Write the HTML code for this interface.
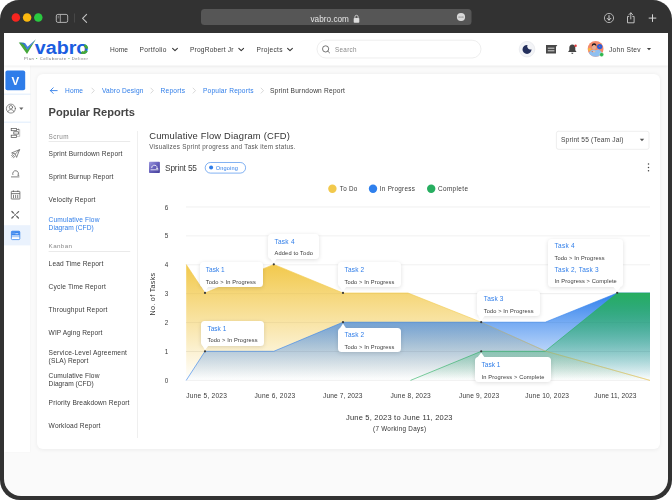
<!DOCTYPE html>
<html lang="en">
<head>
<meta charset="utf-8">
<title>Vabro - Cumulative Flow Diagram</title>
<style>
html,body{margin:0;padding:0;}
body{width:672px;height:500px;overflow:hidden;background:#fff;font-family:"Liberation Sans",Arial,sans-serif;position:relative;}
.abs{position:absolute;}
.win{position:absolute;left:0;top:0;width:672px;height:500px;background:#323232;border-radius:19px 19px 20px 20px;overflow:hidden;}
.page{position:absolute;left:4px;top:33px;width:664.4px;height:462.6px;background:#fafafa;border-radius:0 0 17px 17px;overflow:hidden;}
.t{position:absolute;white-space:nowrap;line-height:12px;height:12px;}
.nav{position:absolute;left:0;top:0;width:664px;height:32px;background:#fff;box-shadow:0 1px 0 rgba(255,255,255,.55), 0 1.5px 3px rgba(0,0,0,.07);}
.rail{position:absolute;left:0;top:32px;width:26px;height:386.6px;background:#fff;box-shadow:0.5px 0 1.5px rgba(0,0,0,.05), 0.5px 0 0 rgba(255,255,255,.5);}
.card{position:absolute;left:33.3px;top:41px;width:623px;height:375px;background:#fff;border-radius:6px;box-shadow:0 0.5px 4px rgba(0,0,0,.06);}
.tip{position:absolute;background:#fff;border-radius:3.5px;box-shadow:0 1px 4px rgba(0,0,0,.13);}
.hr{position:absolute;height:0.6px;background:#dcdcdc;}
</style>
</head>
<body>
<div class="win">
  <!-- title bar -->
  <svg class="abs" style="left:0;top:0" width="672" height="33" viewBox="0 0 672 33" fill="none">
    <circle cx="15.9" cy="17.5" r="4.25" fill="#f6251f"/><circle cx="27.1" cy="17.5" r="4.25" fill="#fbb90f"/><circle cx="38.3" cy="17.5" r="4.25" fill="#2ac940"/>
    <rect x="56.3" y="14.4" width="11.4" height="8" rx="1.6" stroke="#bdbdbd" stroke-width="0.9"/>
    <line x1="60.3" y1="14.4" x2="60.3" y2="22.4" stroke="#bdbdbd" stroke-width="0.8"/>
    <line x1="57.6" y1="16.3" x2="59.2" y2="16.3" stroke="#bdbdbd" stroke-width="0.5"/>
    <line x1="57.6" y1="17.8" x2="59.2" y2="17.8" stroke="#bdbdbd" stroke-width="0.5"/>
    <line x1="74.5" y1="13.5" x2="74.5" y2="22.5" stroke="#555" stroke-width="0.6"/>
    <polyline points="86.6,14.3 82.6,18.3 86.6,22.3" stroke="#c4c4c4" stroke-width="1.1" stroke-linecap="round" stroke-linejoin="round"/>
    <rect x="201" y="9" width="270.5" height="16" rx="3.5" fill="#565656"/>
    <!-- lock -->
    <rect x="353.7" y="18" width="5.6" height="4.700" rx="0.8" fill="#dcdcdc"/>
    <path d="M354.9 18.1v-1.200a1.600 1.600 0 0 1 3.200 0v1.200" stroke="#dcdcdc" stroke-width="0.85"/>
    <circle cx="461" cy="17" r="4.1" fill="#d9d9d9"/>
    <circle cx="459.1" cy="17" r="0.6" fill="#555"/><circle cx="461" cy="17" r="0.6" fill="#555"/><circle cx="462.9" cy="17" r="0.6" fill="#555"/>
    <!-- download -->
    <circle cx="609" cy="18" r="4.6" stroke="#cfcfcf" stroke-width="0.8"/>
    <path d="M609 15.600v4.400M607.200 18.400l1.800 1.800 1.800-1.800" stroke="#d6d6d6" stroke-width="1" stroke-linecap="round" stroke-linejoin="round"/>
    <!-- share -->
    <path d="M629.2 16.4h-1.7v6.4h6.6v-6.4h-1.7" stroke="#cfcfcf" stroke-width="0.9" stroke-linejoin="round"/>
    <path d="M630.8 13v6M629 14.6l1.8-1.8 1.8 1.8" stroke="#cfcfcf" stroke-width="0.9" stroke-linecap="round" stroke-linejoin="round"/>
    <!-- plus -->
    <path d="M652.5 14.7v6.8M649.1 18.1h6.8" stroke="#d4d4d4" stroke-width="1" stroke-linecap="round"/>
  </svg>

  <div class="page">
    <div class="rail"></div>
    <div class="nav"></div>
    <div class="card"></div>
  </div>
</div>

<!-- everything below is positioned in absolute page coordinates -->
<svg class="abs" style="left:0;top:0" width="672" height="500" viewBox="0 0 672 500" fill="none">
  <defs>
    <linearGradient id="gy" x1="0" y1="264.4" x2="0" y2="380.3" gradientUnits="userSpaceOnUse">
      <stop offset="0" stop-color="#f2c94c" stop-opacity="1"/>
      <stop offset="1" stop-color="#f2c94c" stop-opacity="0"/>
    </linearGradient>
    <linearGradient id="gb" x1="0" y1="293" x2="0" y2="380.3" gradientUnits="userSpaceOnUse">
      <stop offset="0" stop-color="#2f80ed" stop-opacity="1"/>
      <stop offset="1" stop-color="#2f80ed" stop-opacity="0"/>
    </linearGradient>
    <linearGradient id="gg" x1="0" y1="293" x2="0" y2="380.3" gradientUnits="userSpaceOnUse">
      <stop offset="0" stop-color="#27ae60" stop-opacity="1"/>
      <stop offset="1" stop-color="#27ae60" stop-opacity="0"/>
    </linearGradient>
    <linearGradient id="gp" x1="0" y1="0" x2="1" y2="1">
      <stop offset="0" stop-color="#9c98de"/>
      <stop offset="0.5" stop-color="#6660bb"/>
      <stop offset="1" stop-color="#46409a"/>
    </linearGradient>
  </defs>

  <!-- logo -->
  <g id="logo">
    <path d="M18.8 42.5L23.8 42.7L27.3 49.6L36 39L27 53.9Z" fill="#46a83a"/>
    <path d="M19.6 42.6L25 42.9L27.6 46.8L35.6 39.4L27.5 50L23.6 44.4Z" fill="#2f6fdc" opacity=".9"/>
    <text x="34.8" y="53.7" font-family="'Liberation Sans',Arial,sans-serif" font-weight="700" font-size="17.6" textLength="53.6" lengthAdjust="spacingAndGlyphs" fill="#1b5de0">vabro</text>
    <path d="M84.290 45.480A3.450 3.700 0 0 1 86.840 48.730" stroke="#46a83a" stroke-width="2.700"/>
    <path d="M86.530 50.610A3.450 3.700 0 0 1 81.420 52.080" stroke="#46a83a" stroke-width="2.700"/>
  </g>

  <!-- nav carets -->
  <g stroke="#333" stroke-width="1.05" stroke-linecap="round" stroke-linejoin="round">
    <polyline points="172.6,48.3 175,50.7 177.4,48.3"/>
    <polyline points="238.8,48.3 241.2,50.7 243.6,48.3"/>
    <polyline points="287.6,48.3 290,50.7 292.4,48.3"/>
  </g>
  <!-- search -->
  <rect x="317" y="40.200" width="164" height="17.800" rx="8.900" fill="#fff" stroke="#e3e3e3" stroke-width="0.600"/>
  <circle cx="325.6" cy="48.900" r="3.100" stroke="#555" stroke-width="0.800"/>
  <line x1="327.900" y1="51.200" x2="329.600" y2="52.900" stroke="#555" stroke-width="0.800" stroke-linecap="round"/>
  <!-- moon -->
  <circle cx="527" cy="49.2" r="7.8" fill="#f3f4f7" stroke="#e2e4ea" stroke-width="0.6"/>
  <path d="M527.5 45A4.5 4.5 0 1 0 531.5 49.2A3.1 3.1 0 0 1 527.5 45Z" fill="#232f5c"/>
  <!-- message icon -->
  <path d="M546 45h11.4l-1.4 1.7v6.7h-10z" fill="#484848"/>
  <line x1="547.8" y1="48.2" x2="554.4" y2="48.2" stroke="#e8e8e8" stroke-width="0.9"/>
  <line x1="547.8" y1="50.8" x2="554.4" y2="50.8" stroke="#e8e8e8" stroke-width="0.9"/>
  <!-- bell -->
  <path d="M572.3 44.6c-1.9 0-3 1.4-3 3.2v2.4l-1 1.4v.5h8v-.5l-1-1.4v-2.4c0-1.8-1.1-3.2-3-3.2z" fill="#444"/>
  <path d="M571.2 52.8h2.2a1.1 1.1 0 0 1-2.2 0z" fill="#444"/>
  <circle cx="575.6" cy="45.7" r="1.2" fill="#e23b3b"/>
  <!-- avatar -->
  <clipPath id="avc"><circle cx="595.6" cy="48.9" r="7.9"/></clipPath>
  <circle cx="595.6" cy="48.9" r="7.9" fill="#f48a6b"/>
  <g clip-path="url(#avc)">
    <circle cx="589.7" cy="49.3" r="1.6" fill="#f6b63e"/>
    <path d="M588 58c.2-5.400 2-8 5.200-8.300l2.400.6 2.400-.8c3 .6 4.600 3.200 5.200 8.500z" fill="#8fbff0"/>
    <path d="M592.2 50.8l1.9 1.9 1.7-2z" fill="#e9c3aa"/>
    <ellipse cx="594" cy="47.2" rx="2" ry="2.5" fill="#e2ae93"/>
    <path d="M591.8 46.6c-.3-2.2.8-3.4 2.3-3.4s2.6 1.2 2.2 3.2c-.6-1.1-1.300-1.500-2.2-1.500s-1.700.500-2.300 1.700z" fill="#2a2024"/>
    <circle cx="599.7" cy="46.6" r="2.7" fill="#2c5fd8"/>
    <circle cx="599.7" cy="46.3" r="0.6" fill="#e8505a"/>
    <circle cx="592.3" cy="51.6" r="0.6" fill="#e0604a"/>
  </g>
  <circle cx="601.6" cy="54.6" r="2.1" fill="#2fb84f" stroke="#fff" stroke-width="0.4"/>
  <path d="M646.9 48l2.1 2.3 2.1-2.3z" fill="#444"/>

  <!-- rail -->
  <rect x="5.4" y="70.4" width="19.8" height="19.8" rx="2" fill="#2f7de9"/>
  <rect x="4" y="93.8" width="26.5" height="0.6" fill="#c9defa"/>
  <rect x="4" y="121.8" width="26.5" height="0.6" fill="#c9defa"/>
  <rect x="4" y="225.2" width="26.5" height="20.2" fill="#eaf2fd"/>
  <g stroke="#666" stroke-width="0.75" stroke-linecap="round" stroke-linejoin="round">
    <circle cx="10.9" cy="108.6" r="4.5"/>
    <circle cx="10.9" cy="107.2" r="1.7"/>
    <path d="M7.8 111.8c.6-1.5 1.7-2.2 3.1-2.2s2.5.7 3.1 2.2"/>
  </g>
  <path d="M19.2 107.6l2.1 2.3 2.1-2.3z" fill="#666"/>
  <!-- icon1 gantt -->
  <g stroke="#555" stroke-width="0.75" fill="none">
    <rect x="11.2" y="128.4" width="5.4" height="2.3"/>
    <rect x="13.8" y="131.8" width="4.6" height="2.3"/>
    <rect x="11.2" y="135.2" width="5.4" height="2.4"/>
    <path d="M16.6 129.5h3.1v6.9h-3.1" stroke="#999" stroke-width="0.6"/>
    <path d="M18.6 128.4l-1.4 1.1 1.4 1.1z" fill="#555" stroke="none"/>
  </g>
  <!-- icon2 rocket -->
  <g stroke="#555" stroke-width="0.7" stroke-linejoin="round" stroke-linecap="round" fill="none">
    <path d="M12 152.8l7.6-3.2-3 7.8-1.4-3.2z"/>
    <path d="M15.2 154.2l4.2-4.4M13.6 155.4l-1.4 1.6M14.4 156.4l-.8 1.4M12.8 154.6l-1.2.8"/>
  </g>
  <!-- icon3 libra -->
  <g stroke="#555" stroke-width="0.75" stroke-linecap="round" fill="none">
    <path d="M12.8 174.6a2.9 2.9 0 1 1 5 .8h1"/>
    <path d="M11.4 176.9h7.6"/>
  </g>
  <!-- icon4 calendar -->
  <g stroke="#555" stroke-width="0.75" fill="none">
    <rect x="11.3" y="191.4" width="8.6" height="7.6" rx="0.3"/>
    <path d="M11.3 193.6h8.6M13.4 190.4v1.6M17.8 190.4v1.6M13.5 194.8v3.4M15.6 194.8v3.4M17.7 194.8v3.4"/>
  </g>
  <!-- icon5 tools -->
  <g stroke="#555" stroke-linecap="round" fill="none">
    <path d="M12.6 212.2l5.6 5.6M18 212l-5.8 5.8" stroke-width="0.7"/>
    <path d="M11.9 211.5l1.3 1.3M17.3 212.9l1.3-1.3M16.9 216.5l1.5 1.5M13.2 216.7l-1.3 1.3" stroke-width="1.3" stroke="#666"/>
  </g>
  <!-- icon6 active -->
  <rect x="11.4" y="231.2" width="8.4" height="8.4" rx="0.9" stroke="#3a86ee" stroke-width="0.8" fill="#fff"/>
  <rect x="11.4" y="231.2" width="8.4" height="4.2" fill="#3a86ee"/>
  <line x1="12.6" y1="233.2" x2="14.6" y2="233.2" stroke="#fff" stroke-width="0.7" stroke-dasharray="0.7 0.5"/>
  <line x1="15.6" y1="233.6" x2="18.6" y2="233.6" stroke="#fff" stroke-width="1.2" stroke-dasharray="0.6 0.4"/>
  <line x1="11.4" y1="236.7" x2="19.8" y2="236.7" stroke="#3a86ee" stroke-width="0.5"/>

  <!-- breadcrumb -->
  <g stroke="#2f7de9" stroke-width="0.9" stroke-linecap="round" stroke-linejoin="round">
    <path d="M50.4 90.6h6.8M53.2 87.8l-2.8 2.8 2.8 2.8"/>
  </g>
  <g stroke="#c8c8c8" stroke-width="0.7" stroke-linecap="round" stroke-linejoin="round">
    <polyline points="91.9,88.1 94.3,90.6 91.9,93.1"/>
    <polyline points="150.9,88.1 153.3,90.6 150.9,93.1"/>
    <polyline points="193.1,88.1 195.5,90.6 193.1,93.1"/>
    <polyline points="261.1,88.1 263.5,90.6 261.1,93.1"/>
  </g>

  <!-- list separators -->
  <rect x="48.6" y="141.4" width="81.6" height="0.6" fill="#dcdcdc"/>
  <rect x="48.6" y="251" width="81.6" height="0.6" fill="#dcdcdc"/>
  <rect x="137.2" y="131" width="0.6" height="307" fill="#e4e4e4"/>

  <!-- sprint icon -->
  <rect x="149" y="161.8" width="10.9" height="11.2" rx="0.8" fill="url(#gp)"/>
  <g stroke="#fff" stroke-width="0.8" stroke-linecap="round" fill="none">
    <path d="M151.7 167.7a2.7 2 0 1 1 4.7.8h1.4"/>
    <path d="M151 169.8h7"/>
  </g>
  <!-- pill -->
  <rect x="205.2" y="162.5" width="40.4" height="10.6" rx="5.3" fill="#fff" stroke="#2f7de9" stroke-width="0.6"/>
  <circle cx="211.1" cy="167.5" r="2" fill="#2f7de9"/>
  <!-- select -->
  <rect x="556.4" y="131.3" width="92.6" height="18" rx="2" fill="#fff" stroke="#e2e2e2" stroke-width="0.6"/>
  <path d="M639.8 138.8l2.2 2.4 2.2-2.4z" fill="#555"/>
  <!-- kebab -->
  <circle cx="648.5" cy="164" r="0.75" fill="#444"/><circle cx="648.5" cy="167.4" r="0.75" fill="#444"/><circle cx="648.5" cy="170.8" r="0.75" fill="#444"/>
  <!-- legend -->
  <circle cx="332.4" cy="188.7" r="4.2" fill="#f2c94c"/>
  <circle cx="373" cy="188.7" r="4.2" fill="#2f80ed"/>
  <circle cx="431.2" cy="188.7" r="4.2" fill="#27ae60"/>

  <!-- grid -->
  <g stroke="#e6e6e6" stroke-width="0.6">
    <line x1="186" y1="207" x2="650" y2="207"/>
    <line x1="186" y1="235.9" x2="650" y2="235.9"/>
    <line x1="186" y1="264.8" x2="650" y2="264.8"/>
    <line x1="186" y1="293.7" x2="650" y2="293.7"/>
    <line x1="186" y1="322.6" x2="650" y2="322.6"/>
    <line x1="186" y1="351.5" x2="650" y2="351.5"/>
    <line x1="186" y1="380.4" x2="650" y2="380.4"/>
  </g>
  <!-- areas -->
  <path d="M186.2 264.4L205 293L273.8 264.4L343 293L408 293L481.2 322.2L545.2 351L650 380.4L186.2 380.4Z" fill="url(#gy)"/>
  <path d="M186.2 264.4L205 293L273.8 264.4L343 293L408 293L481.2 322.2L545.2 351L650 380.4" stroke="#f2c94c" stroke-width="0.6"/>
  <path d="M186.2 380.4L205 351.3L273.8 351.3L343 322.2L481.2 322.2L545.2 322.2L617.2 293L650 293L650 380.4Z" fill="url(#gb)"/>
  <path d="M186.2 380.4L205 351.3L273.8 351.3L343 322.2L481.2 322.2L545.2 322.2L617.2 293L650 293" stroke="#2f80ed" stroke-width="0.6"/>
  <path d="M410.5 380.4L481.2 351.3L545.2 351.3L617.2 293L650 293L650 380.4Z" fill="url(#gg)"/>
  <path d="M410.5 380.4L481.2 351.3L545.2 351.3L617.2 293L650 293" stroke="#27ae60" stroke-width="0.6"/>
  <path d="M481.2 322.2L545.2 351L650 380.4" stroke="#d9bd6a" stroke-width="0.6" opacity=".55"/>
  <!-- grid over areas (faint) -->
  <g stroke="#000" stroke-opacity="0.028" stroke-width="0.6">
    <line x1="186" y1="293.7" x2="650" y2="293.7"/>
    <line x1="186" y1="322.6" x2="650" y2="322.6"/>
    <line x1="186" y1="351.5" x2="650" y2="351.5"/>
  </g>
  <!-- points -->
  <g fill="#3a3a3a">
    <circle cx="205" cy="292.9" r="1.1"/><circle cx="273.8" cy="264.3" r="1.1"/><circle cx="343" cy="292.9" r="1.1"/>
    <circle cx="205" cy="351.3" r="1.1"/><circle cx="343" cy="322.2" r="1.1"/><circle cx="481.2" cy="322.2" r="1.1"/>
    <circle cx="481.2" cy="351.3" r="1.1"/><circle cx="617.2" cy="292.8" r="1.1"/>
  </g>
</svg>

<!-- tooltips -->
<div class="tip" style="left:200px;top:262px;width:62.6px;height:25.2px;"></div>
<div class="tip" style="left:268px;top:233.8px;width:50.8px;height:25.2px;"></div>
<div class="tip" style="left:338.2px;top:261.8px;width:62.8px;height:25.4px;"></div>
<div class="tip" style="left:201.2px;top:321.2px;width:62.8px;height:24.6px;"></div>
<div class="tip" style="left:338.2px;top:328px;width:62.8px;height:24.4px;"></div>
<div class="tip" style="left:477px;top:290.8px;width:63px;height:25.2px;"></div>
<div class="tip" style="left:475px;top:357.4px;width:75.6px;height:24.8px;"></div>
<div class="tip" style="left:548px;top:238.6px;width:75px;height:48.4px;"></div>
<svg class="abs" style="left:0;top:0" width="672" height="500" viewBox="0 0 672 500">
  <g fill="#fff">
    <path d="M201.5 286.5h7l-3.5 5z"/>
    <path d="M270 258.5h7l-3.4 4.6z"/>
    <path d="M339.5 286.5h7l-3.5 5z"/>
    <path d="M202 345h7l-4 5z"/>
    <path d="M339.5 329h7l-3.5 -5.4z"/>
    <path d="M478 315.5h7l-3.8 5.2z"/>
    <path d="M477 358h8l-3.8 -5.4z"/>
    <path d="M613 286.5h8l-3.8 5z"/>
  </g>
</svg>

<div id="txt" style="position:absolute;left:0;top:0;width:672px;height:500px;will-change:transform;">
<div class="abs" style="left:5.4px;top:70.4px;width:19.8px;height:19.8px;line-height:22px;text-align:center;color:#fff;font-size:11.6px;font-weight:700;">V</div>
<div class="t" style="left:131px;top:288px;width:44px;text-align:center;transform:rotate(-90deg);font-size:7.2px;letter-spacing:0.3px;color:#333;">No. of Tasks</div>
<span class="t" style="left:310.50px;top:14px;font-size:8.20px;letter-spacing:0.027px;color:#e6e6e6;">vabro.com</span>
<span class="t" style="left:110.00px;top:44px;font-size:6.60px;letter-spacing:0.132px;color:#3a3a3a;">Home</span>
<span class="t" style="left:139.50px;top:44px;font-size:6.60px;letter-spacing:0.348px;color:#3a3a3a;">Portfolio</span>
<span class="t" style="left:190.00px;top:44px;font-size:6.60px;letter-spacing:0.201px;color:#3a3a3a;">ProgRobert Jr</span>
<span class="t" style="left:256.50px;top:44px;font-size:6.60px;letter-spacing:0.308px;color:#3a3a3a;">Projects</span>
<span class="t" style="left:335.00px;top:44px;font-size:6.30px;letter-spacing:0.308px;color:#8a8a8a;">Search</span>
<span class="t" style="left:609.00px;top:44px;font-size:6.60px;letter-spacing:0.268px;color:#3a3a3a;">John Stev</span>
<span class="t" style="left:24.00px;top:53px;font-size:4.10px;letter-spacing:0.535px;color:#777;">Plan <span style="color:#46a83a">•</span> Collaborate <span style="color:#46a83a">•</span> Deliver</span>
<span class="t" style="left:65.00px;top:85px;font-size:6.60px;letter-spacing:0.132px;color:#2f7de9;">Home</span>
<span class="t" style="left:102.00px;top:85px;font-size:6.60px;letter-spacing:0.182px;color:#2f7de9;">Vabro Design</span>
<span class="t" style="left:160.50px;top:85px;font-size:6.60px;letter-spacing:0.232px;color:#2f7de9;">Reports</span>
<span class="t" style="left:203.00px;top:85px;font-size:6.60px;letter-spacing:0.201px;color:#2f7de9;">Popular Reports</span>
<span class="t" style="left:270.00px;top:85px;font-size:6.60px;letter-spacing:0.217px;color:#3a3a3a;">Sprint Burndown Report</span>
<span class="t" style="left:48.60px;top:106px;font-size:11.10px;letter-spacing:0.004px;color:#444;font-weight:700;">Popular Reports</span>
<span class="t" style="left:48.60px;top:131px;font-size:6.36px;letter-spacing:0.382px;color:#888;">Scrum</span>
<span class="t" style="left:48.60px;top:148px;font-size:6.60px;letter-spacing:0.165px;color:#3a3a3a;">Sprint Burndown Report</span>
<span class="t" style="left:48.60px;top:171px;font-size:6.60px;letter-spacing:0.153px;color:#3a3a3a;">Sprint Burnup Report</span>
<span class="t" style="left:48.60px;top:194px;font-size:6.60px;letter-spacing:0.179px;color:#3a3a3a;">Velocity Report</span>
<span class="t" style="left:48.60px;top:214px;font-size:6.60px;letter-spacing:0.151px;color:#2f7de9;">Cumulative Flow</span>
<span class="t" style="left:48.60px;top:222px;font-size:6.60px;letter-spacing:0.030px;color:#2f7de9;">Diagram (CFD)</span>
<span class="t" style="left:48.60px;top:240px;font-size:6.24px;letter-spacing:0.375px;color:#888;">Kanban</span>
<span class="t" style="left:48.60px;top:258px;font-size:6.60px;letter-spacing:0.149px;color:#3a3a3a;">Lead Time Report</span>
<span class="t" style="left:48.60px;top:281px;font-size:6.60px;letter-spacing:0.182px;color:#3a3a3a;">Cycle Time Report</span>
<span class="t" style="left:48.60px;top:304px;font-size:6.60px;letter-spacing:0.219px;color:#3a3a3a;">Throughput Report</span>
<span class="t" style="left:48.60px;top:327px;font-size:6.60px;letter-spacing:0.104px;color:#3a3a3a;">WIP Aging Report</span>
<span class="t" style="left:48.60px;top:347px;font-size:6.60px;letter-spacing:0.212px;color:#3a3a3a;">Service-Level Agreement</span>
<span class="t" style="left:48.60px;top:355px;font-size:6.60px;letter-spacing:0.108px;color:#3a3a3a;">(SLA) Report</span>
<span class="t" style="left:48.60px;top:370px;font-size:6.60px;letter-spacing:0.151px;color:#3a3a3a;">Cumulative Flow</span>
<span class="t" style="left:48.60px;top:378px;font-size:6.60px;letter-spacing:0.030px;color:#3a3a3a;">Diagram (CFD)</span>
<span class="t" style="left:48.60px;top:397px;font-size:6.60px;letter-spacing:0.161px;color:#3a3a3a;">Priority Breakdown Report</span>
<span class="t" style="left:48.60px;top:420px;font-size:6.60px;letter-spacing:0.179px;color:#3a3a3a;">Workload Report</span>
<span class="t" style="left:149.20px;top:130px;font-size:9.40px;letter-spacing:0.189px;color:#333;">Cumulative Flow Diagram (CFD)</span>
<span class="t" style="left:149.20px;top:141px;font-size:6.30px;letter-spacing:0.274px;color:#555;">Visualizes Sprint progress and Task item status.</span>
<span class="t" style="left:165.00px;top:162px;font-size:8.30px;letter-spacing:-0.153px;color:#3a3a3a;">Sprint 55</span>
<span class="t" style="left:215.70px;top:162px;font-size:5.60px;letter-spacing:0.188px;color:#2f7de9;">Ongoing</span>
<span class="t" style="left:561.00px;top:134px;font-size:6.60px;letter-spacing:0.181px;color:#444;">Sprint 55 (Team Jai)</span>
<span class="t" style="left:339.80px;top:183px;font-size:6.30px;letter-spacing:0.261px;color:#3a3a3a;">To Do</span>
<span class="t" style="left:379.80px;top:183px;font-size:6.30px;letter-spacing:0.279px;color:#3a3a3a;">In Progress</span>
<span class="t" style="left:438.00px;top:183px;font-size:6.38px;letter-spacing:0.383px;color:#3a3a3a;">Complete</span>
<span class="t" style="left:164.80px;top:375px;font-size:6.30px;letter-spacing:-0.004px;color:#3a3a3a;">0</span>
<span class="t" style="left:164.80px;top:346px;font-size:6.30px;letter-spacing:-0.004px;color:#3a3a3a;">1</span>
<span class="t" style="left:164.80px;top:317px;font-size:6.30px;letter-spacing:-0.004px;color:#3a3a3a;">2</span>
<span class="t" style="left:164.80px;top:288px;font-size:6.30px;letter-spacing:-0.004px;color:#3a3a3a;">3</span>
<span class="t" style="left:164.80px;top:259px;font-size:6.30px;letter-spacing:-0.004px;color:#3a3a3a;">4</span>
<span class="t" style="left:164.80px;top:230px;font-size:6.30px;letter-spacing:-0.004px;color:#3a3a3a;">5</span>
<span class="t" style="left:164.80px;top:202px;font-size:6.30px;letter-spacing:-0.004px;color:#3a3a3a;">6</span>
<span class="t" style="left:186.20px;top:390px;font-size:6.60px;letter-spacing:0.239px;color:#3a3a3a;">June 5, 2023</span>
<span class="t" style="left:254.50px;top:390px;font-size:6.60px;letter-spacing:0.239px;color:#3a3a3a;">June 6, 2023</span>
<span class="t" style="left:323.00px;top:390px;font-size:6.60px;letter-spacing:0.121px;color:#3a3a3a;">June 7, 2023</span>
<span class="t" style="left:390.50px;top:390px;font-size:6.60px;letter-spacing:0.194px;color:#3a3a3a;">June 8, 2023</span>
<span class="t" style="left:459.00px;top:390px;font-size:6.60px;letter-spacing:0.194px;color:#3a3a3a;">June 9, 2023</span>
<span class="t" style="left:525.30px;top:390px;font-size:6.60px;letter-spacing:0.155px;color:#3a3a3a;">June 10, 2023</span>
<span class="t" style="left:594.30px;top:390px;font-size:6.60px;letter-spacing:0.071px;color:#3a3a3a;">June 11, 2023</span>
<span class="t" style="left:346.00px;top:412px;font-size:7.50px;letter-spacing:0.204px;color:#333;">June 5, 2023 to June 11, 2023</span>
<span class="t" style="left:373.00px;top:423px;font-size:6.30px;letter-spacing:0.297px;color:#333;">(7 Working Days)</span>
<span class="t" style="left:205.80px;top:264px;font-size:6.50px;letter-spacing:0.003px;color:#2f7de9;">Task 1</span>
<span class="t" style="left:205.80px;top:276px;font-size:5.70px;letter-spacing:0.129px;color:#3a3a3a;">Todo &gt; In Progress</span>
<span class="t" style="left:274.50px;top:236px;font-size:6.50px;letter-spacing:0.243px;color:#2f7de9;">Task 4</span>
<span class="t" style="left:274.50px;top:247px;font-size:5.70px;letter-spacing:0.153px;color:#3a3a3a;">Added to Todo</span>
<span class="t" style="left:344.60px;top:264px;font-size:6.50px;letter-spacing:0.163px;color:#2f7de9;">Task 2</span>
<span class="t" style="left:344.60px;top:276px;font-size:5.70px;letter-spacing:0.106px;color:#3a3a3a;">Todo &gt; In Progress</span>
<span class="t" style="left:207.50px;top:323px;font-size:6.50px;letter-spacing:0.003px;color:#2f7de9;">Task 1</span>
<span class="t" style="left:207.50px;top:334px;font-size:5.70px;letter-spacing:0.129px;color:#3a3a3a;">Todo &gt; In Progress</span>
<span class="t" style="left:344.60px;top:329px;font-size:6.50px;letter-spacing:0.163px;color:#2f7de9;">Task 2</span>
<span class="t" style="left:344.60px;top:341px;font-size:5.70px;letter-spacing:0.106px;color:#3a3a3a;">Todo &gt; In Progress</span>
<span class="t" style="left:483.70px;top:293px;font-size:6.50px;letter-spacing:0.203px;color:#2f7de9;">Task 3</span>
<span class="t" style="left:483.70px;top:305px;font-size:5.70px;letter-spacing:0.118px;color:#3a3a3a;">Todo &gt; In Progress</span>
<span class="t" style="left:481.60px;top:359px;font-size:6.50px;letter-spacing:0.003px;color:#2f7de9;">Task 1</span>
<span class="t" style="left:481.60px;top:371px;font-size:5.70px;letter-spacing:0.141px;color:#3a3a3a;">In Progress &gt; Complete</span>
<span class="t" style="left:554.60px;top:240px;font-size:6.50px;letter-spacing:0.243px;color:#2f7de9;">Task 4</span>
<span class="t" style="left:554.60px;top:252px;font-size:5.70px;letter-spacing:0.118px;color:#3a3a3a;">Todo &gt; In Progress</span>
<span class="t" style="left:554.60px;top:264px;font-size:6.50px;letter-spacing:0.226px;color:#2f7de9;">Task 2, Task 3</span>
<span class="t" style="left:554.60px;top:275px;font-size:5.70px;letter-spacing:0.108px;color:#3a3a3a;">In Progress &gt; Complete</span>
</div>
</body>
</html>
